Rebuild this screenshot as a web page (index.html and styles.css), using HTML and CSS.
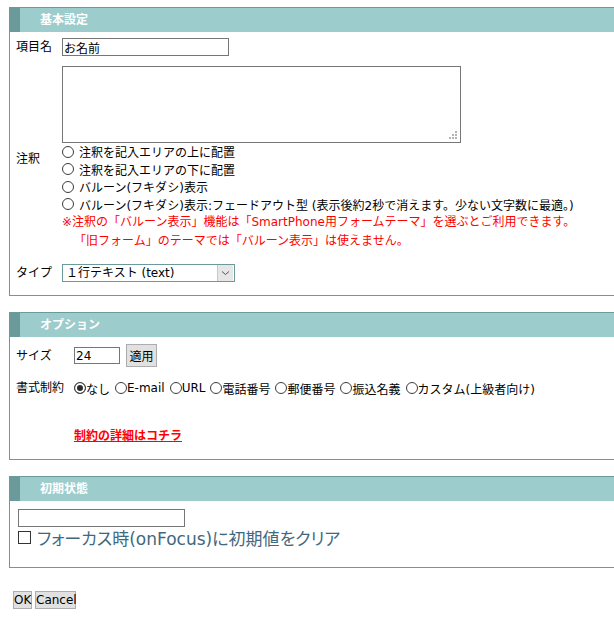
FILE: index.html
```html
<!DOCTYPE html>
<html lang="ja">
<head>
<meta charset="utf-8">
<title>項目設定</title>
<link rel="stylesheet" href="styles.css">
</head>
<body>
<div class="page">
  <section class="panel">
    <h2 class="panel-head">基本設定</h2>
    <div class="panel-body body-basic">
      <div class="row row-name">
        <div class="label label-basic">項目名</div>
        <input class="txt txt-name" type="text" value="お名前">
      </div>
      <div class="row row-note">
        <div class="label label-basic">注釈</div>
        <div class="field">
          <div class="ta-wrap"><textarea class="ta"></textarea></div>
          <label class="radio-line"><input class="radio radio-gap" type="radio" name="note">注釈を記入エリアの上に配置</label>
          <label class="radio-line"><input class="radio radio-gap" type="radio" name="note">注釈を記入エリアの下に配置</label>
          <label class="radio-line"><input class="radio radio-gap" type="radio" name="note">バルーン(フキダシ)表示</label>
          <label class="radio-line"><input class="radio radio-gap" type="radio" name="note">バルーン(フキダシ)表示:フェードアウト型 (表示後約2秒で消えます。少ない文字数に最適。)</label>
          <p class="note">※注釈の「バルーン表示」機能は「SmartPhone用フォームテーマ」を選ぶとご利用できます。</p>
          <p class="note note-indent">「旧フォーム」のテーマでは「バルーン表示」は使えません。</p>
        </div>
      </div>
      <div class="row row-type">
        <div class="label label-basic">タイプ</div>
        <div class="select">
          <span class="select-text">１行テキスト (text)</span>
          <span class="select-arrow"><svg width="9" height="6" viewBox="0 0 9 6"><path d="M1 1.5 L4.5 4.5 L8 1.5" fill="none" stroke="#555" stroke-width="1"/></svg></span>
        </div>
      </div>
    </div>
  </section>

  <section class="panel">
    <h2 class="panel-head">オプション</h2>
    <div class="panel-body body-option">
      <div class="row row-size">
        <div class="label label-option">サイズ</div>
        <input class="txt txt-size" type="text" value="24">
        <button class="btn btn-apply" type="button">適用</button>
      </div>
      <div class="row row-format">
        <div class="label label-option">書式制約</div>
        <label class="opt"><input class="radio" type="radio" name="fmt" checked>なし</label>
        <label class="opt"><input class="radio" type="radio" name="fmt">E-mail</label>
        <label class="opt"><input class="radio" type="radio" name="fmt">URL</label>
        <label class="opt"><input class="radio" type="radio" name="fmt">電話番号</label>
        <label class="opt"><input class="radio" type="radio" name="fmt">郵便番号</label>
        <label class="opt"><input class="radio" type="radio" name="fmt">振込名義</label>
        <label class="opt"><input class="radio" type="radio" name="fmt">カスタム(上級者向け)</label>
      </div>
      <div class="row-link"><a class="detail-link" href="#">制約の詳細はコチラ</a></div>
    </div>
  </section>

  <section class="panel">
    <h2 class="panel-head">初期状態</h2>
    <div class="panel-body body-init">
      <input class="txt txt-init" type="text" value="">
      <label class="check-line"><span class="check"></span>フォーカス時(onFocus)に初期値をクリア</label>
    </div>
  </section>

  <div class="actions">
    <button class="btn btn-ok" type="button">OK</button>
    <button class="btn btn-cancel" type="button">Cancel</button>
  </div>
</div>
</body>
</html>
```

FILE: styles.css
```css
html, body {
  margin: 0;
  padding: 0;
  background: #fff;
  overflow: hidden;
}
body {
  font-family: "DejaVu Sans", "Noto Sans CJK JP", sans-serif;
  font-size: 12px;
  color: #000;
}
.page {
  padding: 7px 0 0 9px;
  overflow: hidden;
}
.panel {
  border: 1px solid #6b9a9a;
  margin-right: -30px;
}
.panel + .panel {
  margin-top: 16px;
}
.panel-head {
  margin: 0;
  height: 24px;
  line-height: 24px;
  background: #9ccccc;
  border-left: 10px solid #6b9a9a;
  padding-left: 20px;
  color: #fff;
  font-size: 12px;
  font-weight: bold;
}
.row {
  display: flex;
  align-items: center;
}
.label {
  flex: none;
  line-height: 16px;
}
.label-basic { width: 46px; }
.label-option { width: 58px; }

.txt {
  box-sizing: border-box;
  border: 1px solid #767676;
  font: inherit;
  font-size: 12px;
  padding: 0 1px;
  margin: 0;
  background: #fff;
  color: #000;
  outline: none;
}

/* basic */
.body-basic {
  padding: 6px 0 13px 6px;
}
.txt-name {
  width: 167px;
  height: 18px;
  line-height: 16px;
}
.row-name {
  margin-bottom: 10px;
}
.ta-wrap {
  position: relative;
  width: 399px;
  height: 77px;
}
.ta {
  display: block;
  box-sizing: border-box;
  width: 399px;
  height: 77px;
  margin: 0;
  border: 1px solid #767676;
  resize: none;
  outline: none;
}
.ta-wrap::after {
  content: "";
  position: absolute;
  right: 4px;
  bottom: 4px;
  width: 2px;
  height: 2px;
  background: #b4b4b4;
  box-shadow: 0 -3px 0 #b4b4b4, 0 -6px 0 #b4b4b4, -3px 0 0 #b4b4b4, -3px -3px 0 #b4b4b4, -6px 0 0 #b4b4b4;
}
.radio-line {
  display: flex;
  align-items: center;
  height: 17.5px;
  white-space: nowrap;
}
.radio {
  appearance: none;
  -webkit-appearance: none;
  box-sizing: border-box;
  width: 12px;
  height: 12px;
  margin: 0;
  border: 1px solid #3c3c3c;
  border-radius: 50%;
  background: #fff;
  flex: none;
}
.radio:checked {
  background: #2a2a2a;
  box-shadow: inset 0 0 0 2px #fff;
}
.radio-gap {
  margin-right: 5px;
}
.note {
  margin: 0;
  color: #ff0000;
  line-height: 19px;
  white-space: nowrap;
}
.note-indent {
  padding-left: 12px;
}
.row-type {
  margin-top: 13px;
}
.select {
  box-sizing: border-box;
  width: 173px;
  height: 18px;
  border: 1px solid #6b9a9a;
  display: flex;
  align-items: center;
  justify-content: space-between;
  background: #fff;
}
.select-text {
  padding-left: 3px;
  line-height: 16px;
}
.select-arrow {
  box-sizing: border-box;
  width: 16px;
  height: 16px;
  margin-right: 1px;
  background: #e6e6e6;
  border-left: 1px solid #c8c8c8;
  display: flex;
  align-items: center;
  justify-content: center;
}

/* option */
.body-option {
  padding: 7px 0 15px 6px;
}
.txt-size {
  width: 46px;
  height: 17px;
  line-height: 15px;
}
.btn {
  box-sizing: border-box;
  margin: 0;
  background: #e1e1e1;
  border: 1px solid #adadad;
  font: inherit;
  font-size: 12px;
  color: #000;
  padding: 0 2px;
}
.btn-apply {
  margin-left: 6px;
  width: 31px;
  height: 23px;
}
.row-format {
  margin-top: 13px;
  height: 16px;
  white-space: nowrap;
}
.opt {
  display: flex;
  align-items: center;
  margin-right: 5px;
}
.row-link {
  margin-top: 32px;
  padding-left: 58px;
  line-height: 16px;
}
.detail-link {
  color: #ff0000;
  font-weight: bold;
  text-decoration: underline;
}

/* init */
.body-init {
  padding: 8px 0 19px 8px;
}
.txt-init {
  display: block;
  width: 167px;
  height: 18px;
}
.check-line {
  display: flex;
  align-items: center;
  height: 21px;
  color: #41697e;
  font-size: 17px;
  white-space: nowrap;
  font-feature-settings: "palt";
}
.check {
  box-sizing: border-box;
  width: 13px;
  height: 13px;
  border: 1px solid #333;
  margin-right: 6px;
  flex: none;
}

.actions {
  margin-top: 23px;
  margin-left: 4px;
  display: flex;
  gap: 3px;
}
.btn-ok, .btn-cancel {
  height: 18px;
  line-height: 15px;
  padding: 0;
}
.btn-ok { width: 19px; }
.btn-cancel { width: 41px; }
```
